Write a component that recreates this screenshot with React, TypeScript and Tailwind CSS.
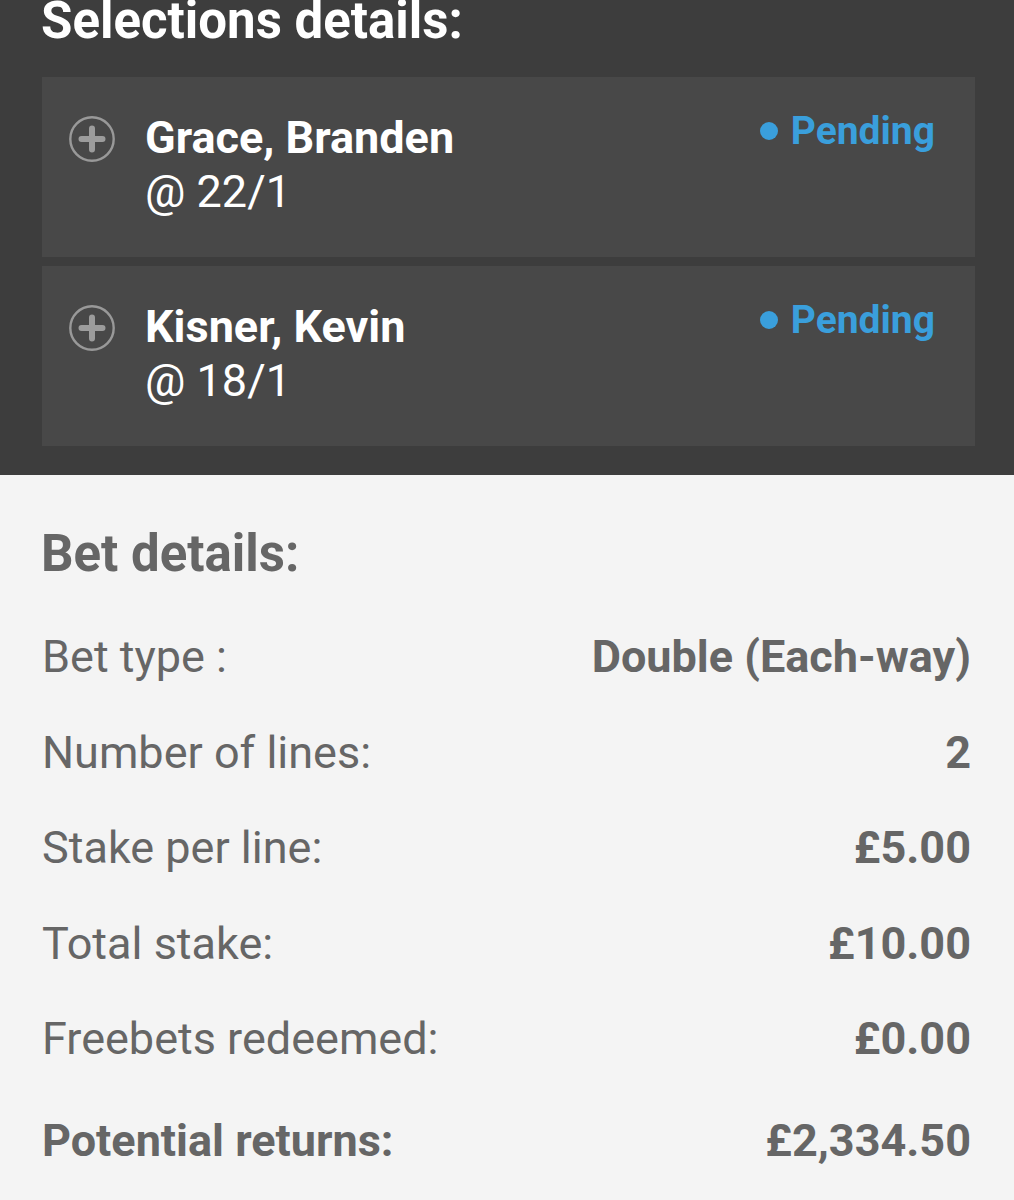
const selections = [
  { name: "Grace, Branden", odds: "@ 22/1", status: "Pending" },
  { name: "Kisner, Kevin", odds: "@ 18/1", status: "Pending" },
];

const rows = [
  { label: "Bet type :", value: "Double (Each-way)" },
  { label: "Number of lines:", value: "2" },
  { label: "Stake per line:", value: "£5.00" },
  { label: "Total stake:", value: "£10.00" },
  { label: "Freebets redeemed:", value: "£0.00" },
];

function PlusCircle() {
  return (
    <svg width="46" height="46" viewBox="0 0 46 46" className="flex-shrink-0 mt-[5px]">
      <circle cx="23" cy="23" r="21.7" fill="none" stroke="#999999" strokeWidth="2.4" />
      <path d="M23 12.5v21M12.5 23h21" stroke="#9c9c9c" strokeWidth="6" strokeLinecap="round" />
    </svg>
  );
}

export default function App() {
  return (
    <div className="w-[1014px] h-[1200px] overflow-hidden bg-[#f4f4f4] font-['Roboto',sans-serif]">
      <div className="bg-[#3d3d3d] pl-[42px] pr-[39px] pb-[29px]">
        <h2 className="-mt-[9px] -ml-[1px] text-[51px] leading-[60px] font-bold text-white">Selections details:</h2>
        <div className="mt-[26px] flex flex-col gap-[9px]">
          {selections.map((s) => (
            <div key={s.name} className="h-[180px] bg-[#484848] pl-[27px] pr-[40px] pt-[34px] flex items-start">
              <PlusCircle />
              <div className="ml-[30px] flex-1 text-white text-[45px] leading-[54px]">
                <div className="font-bold">{s.name}</div>
                <div>{s.odds}</div>
              </div>
              <div className="-mt-[3px] flex items-center gap-[13px] text-[#3a9fdc] text-[39px] leading-[46px] font-bold">
                <span className="w-[18px] h-[18px] rounded-full bg-[#3a9fdc]" />
                <span>{s.status}</span>
              </div>
            </div>
          ))}
        </div>
      </div>

      <div className="pl-[42px] pr-[43px] pt-[49px] text-[#666666]">
        <h2 className="-ml-[1px] text-[51px] leading-[60px] font-bold">Bet details:</h2>
        <div className="mt-[25px]">
          {rows.map((r) => (
            <div key={r.label} className="h-[95.5px] flex items-center justify-between text-[45px] leading-[95.5px]">
              <span>{r.label}</span>
              <span className="font-bold">{r.value}</span>
            </div>
          ))}
          <div className="mt-[6.5px] h-[95.5px] flex items-center justify-between text-[45px] leading-[95.5px] font-bold">
            <span>Potential returns:</span>
            <span>£2,334.50</span>
          </div>
        </div>
      </div>
    </div>
  );
}
